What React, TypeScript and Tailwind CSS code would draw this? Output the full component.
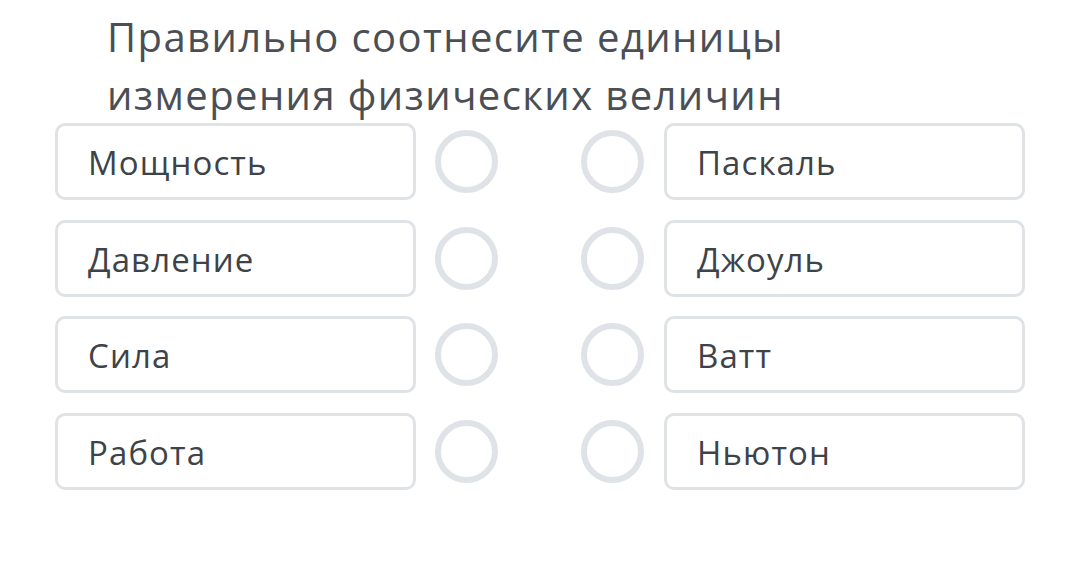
const left = ['Мощность', 'Давление', 'Сила', 'Работа'];
const right = ['Паскаль', 'Джоуль', 'Ватт', 'Ньютон'];

function Box({ label }: { label: string }) {
  return (
    <div className="w-[361px] h-[77px] flex items-center pl-[30px] pt-[3px] border-[3px] border-[#dfe3e6] rounded-[10px] bg-white text-[33px] tracking-[1.1px] text-[#3e4349]">
      {label}
    </div>
  );
}

function Dot() {
  return <div className="w-[63px] h-[63px] rounded-full border-[6px] border-[#dfe3e7]" />;
}

export default function App() {
  return (
    <div
      className="w-[1080px] h-[562px] bg-white overflow-hidden pl-[55px] pt-[8px]"
      style={{ fontFamily: '"Open Sans", "Noto Sans", sans-serif' }}
    >
      <h1 className="ml-[52px] text-[40px] leading-[58px] tracking-[1.4px] text-[#4a4f55] font-normal">
        Правильно соотнесите единицы
        <br />
        измерения физических величин
      </h1>

      <div className="-mt-[1px] flex flex-col gap-[19.5px]">
        {left.map((l, i) => (
          <div key={l} className="flex items-center">
            <Box label={l} />
            <div className="ml-[19px]">
              <Dot />
            </div>
            <div className="ml-[83px]">
              <Dot />
            </div>
            <div className="ml-[20px]">
              <Box label={right[i]} />
            </div>
          </div>
        ))}
      </div>
    </div>
  );
}
